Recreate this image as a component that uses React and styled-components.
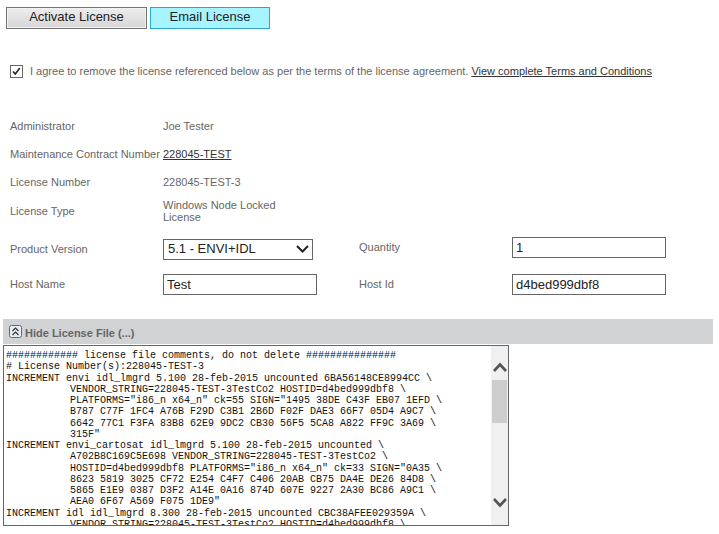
import React from "react";
import styled, { createGlobalStyle } from "styled-components";

const licenseLines = [
  "############ license file comments, do not delete ###############",
  "# License Number(s):228045-TEST-3",
  "INCREMENT envi idl_lmgrd 5.100 28-feb-2015 uncounted 6BA56148CE8994CC \\",
  "  VENDOR_STRING=228045-TEST-3TestCo2 HOSTID=d4bed999dbf8 \\",
  '  PLATFORMS="i86_n x64_n" ck=55 SIGN="1495 38DE C43F EB07 1EFD \\',
  "  B787 C77F 1FC4 A76B F29D C3B1 2B6D F02F DAE3 66F7 05D4 A9C7 \\",
  "  6642 77C1 F3FA 83B8 62E9 9DC2 CB30 56F5 5CA8 A822 FF9C 3A69 \\",
  '  315F"',
  "INCREMENT envi_cartosat idl_lmgrd 5.100 28-feb-2015 uncounted \\",
  "  A702B8C169C5E698 VENDOR_STRING=228045-TEST-3TestCo2 \\",
  '  HOSTID=d4bed999dbf8 PLATFORMS="i86_n x64_n" ck=33 SIGN="0A35 \\',
  "  8623 5819 3025 CF72 E254 C4F7 C406 20AB CB75 DA4E DE26 84D8 \\",
  "  5865 E1E9 0387 D3F2 A14E 0A16 874D 607E 9227 2A30 BC86 A9C1 \\",
  '  AEA0 6F67 A569 F075 1DE9"',
  "INCREMENT idl idl_lmgrd 8.300 28-feb-2015 uncounted CBC38AFEE029359A \\",
  "  VENDOR_STRING=228045-TEST-3TestCo2 HOSTID=d4bed999dbf8 \\",
];

const App = () => (
  <>
    <GlobalStyle />
    <Page>
      <Tabs>
        <TabButton>Activate License</TabButton>
        <TabButton $active>Email License</TabButton>
      </Tabs>

      <Agreement>
        <CheckBox>
          <svg width="11" height="11" viewBox="0 0 11 11">
            <path d="M2 5.5 L4.3 8 L8.8 2" fill="none" stroke="#222" strokeWidth="1.6" />
          </svg>
        </CheckBox>
        <span>I agree to remove the license referenced below as per the terms of the license agreement.</span>
        <TermsLink href="#">View complete Terms and Conditions</TermsLink>
      </Agreement>

      <Details>
        <Row $height={28}>
          <Label>Administrator</Label>
          <Value>Joe Tester</Value>
        </Row>
        <Row $height={28}>
          <Label>Maintenance Contract Number</Label>
          <ValueLink href="#">228045-TEST</ValueLink>
        </Row>
        <Row $height={28}>
          <Label>License Number</Label>
          <Value>228045-TEST-3</Value>
        </Row>
        <Row $height={30}>
          <Label>License Type</Label>
          <Value $wrap>Windows Node Locked License</Value>
        </Row>
        <Row $height={46}>
          <Label>Product Version</Label>
          <SelectBox>
            <span>5.1 - ENVI+IDL</span>
            <svg width="13" height="8" viewBox="0 0 13 8">
              <path d="M1 1 L6.5 6.5 L12 1" fill="none" stroke="#222" strokeWidth="2" />
            </svg>
          </SelectBox>
          <SideLabel $raise>Quantity</SideLabel>
          <TextField $raise value="1" readOnly />
        </Row>
        <Row $height={24}>
          <Label>Host Name</Label>
          <NameField value="Test" readOnly />
          <SideLabel>Host Id</SideLabel>
          <TextField value="d4bed999dbf8" readOnly />
        </Row>
      </Details>

      <SectionBar>
        <svg width="13" height="13" viewBox="0 0 13 13">
          <rect x="0.5" y="0.5" width="12" height="12" rx="2" fill="#e6edf2" stroke="#5b6b78" />
          <path d="M3.5 6 L6.5 3 L9.5 6 M3.5 10 L6.5 7 L9.5 10" fill="none" stroke="#333" strokeWidth="1.2" />
        </svg>
        <SectionTitle>Hide License File (...)</SectionTitle>
      </SectionBar>

      <LicenseBox>
        <LicensePane>
          {licenseLines.map((line, i) => (
            <LicenseLine key={i} $indent={line.startsWith(" ")}>
              {line.trim()}
            </LicenseLine>
          ))}
        </LicensePane>
        <ScrollBar>
          <ArrowIcon width="17" height="34" viewBox="0 0 17 34">
            <path d="M3 25 L9 18.5 L15 25" fill="none" stroke="#555" strokeWidth="2.6" />
          </ArrowIcon>
          <ScrollTrack>
            <ScrollThumb />
          </ScrollTrack>
          <ArrowIcon width="17" height="34" viewBox="0 0 17 34">
            <path d="M3 8 L9 14.5 L15 8" fill="none" stroke="#555" strokeWidth="2.6" />
          </ArrowIcon>
        </ScrollBar>
      </LicenseBox>
    </Page>
  </>
);

export default App;

const GlobalStyle = createGlobalStyle`
  body {
    margin: 0;
    background: #fff;
    font-family: "Liberation Sans", Arial, sans-serif;
  }
`;

const Page = styled.div`
  width: 719px;
  height: 534px;
  overflow: hidden;
  padding: 7px 6px 0 3px;
  box-sizing: border-box;
`;

const Tabs = styled.div`
  display: flex;
  gap: 3px;
  padding-left: 3px;
`;

const TabButton = styled.div`
  box-sizing: border-box;
  height: 22px;
  width: ${(p) => (p.$active ? "120px" : "141px")};
  display: flex;
  align-items: center;
  justify-content: center;
  padding-bottom: 3px;
  font-size: 13px;
  color: #222;
  border: 1px solid ${(p) => (p.$active ? "#2ea3d8" : "#757575")};
  background: ${(p) => (p.$active ? "#a6f4ff" : "linear-gradient(#ededed, #d6d6d6)")};
  box-shadow: ${(p) => (p.$active ? "none" : "inset 0 0 0 1px #f2f2f2")};
`;

const Agreement = styled.div`
  display: flex;
  align-items: center;
  margin: 35px 0 0 7px;
  height: 14px;
  font-size: 11px;
  color: #666;
`;

const CheckBox = styled.div`
  box-sizing: border-box;
  width: 13px;
  height: 13px;
  margin-right: 7px;
  border: 1px solid #666;
  display: flex;
  align-items: center;
  justify-content: center;
  flex-shrink: 0;
`;

const TermsLink = styled.a`
  margin-left: 3px;
  color: #333;
  text-decoration: underline;
`;

const Details = styled.div`
  margin-top: 34px;
  padding-left: 7px;
  font-size: 11px;
  color: #666;
`;

const Row = styled.div`
  display: flex;
  align-items: center;
  height: ${(p) => p.$height}px;
`;

const Label = styled.div`
  width: 153px;
  flex-shrink: 0;
  white-space: nowrap;
`;

const Value = styled.div`
  width: ${(p) => (p.$wrap ? "125px" : "auto")};
  line-height: 12px;
`;

const ValueLink = styled.a`
  color: #333;
  text-decoration: underline;
`;

const SelectBox = styled.div`
  box-sizing: border-box;
  width: 150px;
  height: 21px;
  padding: 0 3px 1px 4px;
  display: flex;
  align-items: center;
  justify-content: space-between;
  border: 1px solid #666;
  font-size: 13px;
  color: #222;
`;

const SideLabel = styled.div`
  width: 153px;
  margin-left: 46px;
  margin-bottom: ${(p) => (p.$raise ? 4 : 0)}px;
`;

const TextField = styled.input`
  box-sizing: border-box;
  width: 154px;
  height: 21px;
  padding: 0 3px;
  margin: 0 0 ${(p) => (p.$raise ? 4 : 0)}px;
  border: 1px solid #666;
  border-radius: 0;
  outline: none;
  font: 13px "Liberation Sans", Arial, sans-serif;
  color: #222;
`;

const NameField = styled(TextField)`
  margin-right: -4px;
`;

const SectionBar = styled.div`
  display: flex;
  align-items: center;
  gap: 3px;
  height: 25px;
  margin-top: 23px;
  padding-left: 6px;
  background: #d1d2d4;
  font-size: 11px;
  font-weight: bold;
  color: #666;
`;

const SectionTitle = styled.span`
  padding-top: 2px;
`;

const LicenseBox = styled.div`
  box-sizing: border-box;
  display: flex;
  width: 506px;
  height: 181px;
  margin-top: 1px;
  border: 1px solid #666;
`;

const LicensePane = styled.div`
  flex: 1;
  padding: 4px 0 0 2px;
  overflow: hidden;
  font: 10px/11.25px "Liberation Mono", "Courier New", monospace;
  color: #111;
`;

const LicenseLine = styled.div`
  white-space: pre;
  padding-left: ${(p) => (p.$indent ? 64 : 0)}px;
`;

const ScrollBar = styled.div`
  width: 17px;
  display: flex;
  flex-direction: column;
  background: #f0f0f0;
  flex-shrink: 0;
`;

const ArrowIcon = styled.svg`
  flex-shrink: 0;
`;

const ScrollTrack = styled.div`
  flex: 1;
  min-height: 0;
`;

const ScrollThumb = styled.div`
  width: 15px;
  height: 43px;
  margin-left: 1px;
  background: #cdcdcd;
`;
